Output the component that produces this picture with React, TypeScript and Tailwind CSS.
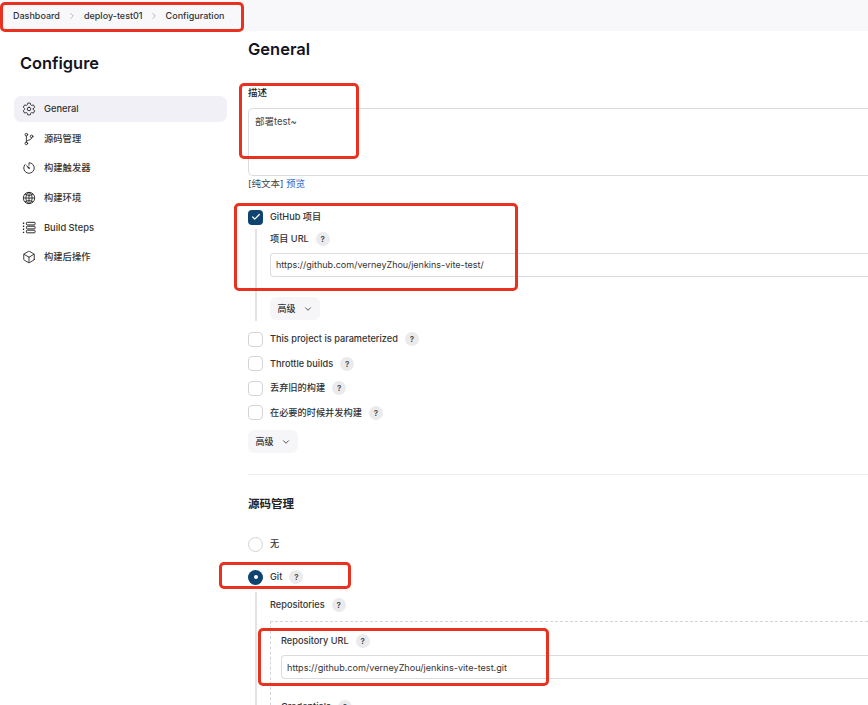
import { Check, ChevronDown, ChevronRight } from "lucide-react";
import { IoSettingsOutline, IoGitBranchOutline, IoTimerOutline, IoGlobeOutline, IoCubeOutline } from "react-icons/io5";

const FONT = "font-['Inter','Noto_Sans_CJK_SC',sans-serif]";

// Build Steps icon: bullets on the left, stacked bars on the right
function StepsIcon({ size }: { size: number }) {
  return (
    <svg width={size} height={size} viewBox="0 0 16 16" fill="none" stroke="#222" strokeWidth="1.1">
      <path d="M1 2.5h1.5M1 6h1.5M1 9.5h1.5M1 13h1.5" strokeWidth="1.6" />
      <rect x="5" y="1.5" width="10" height="3" rx="1" />
      <rect x="5" y="6" width="10" height="3" rx="1" />
      <rect x="5" y="10.5" width="10" height="3" rx="1" />
    </svg>
  );
}

const navItems = [
  { label: "General", icon: IoSettingsOutline, active: true },
  { label: "源码管理", icon: IoGitBranchOutline },
  { label: "构建触发器", icon: IoTimerOutline },
  { label: "构建环境", icon: IoGlobeOutline },
  { label: "Build Steps", icon: StepsIcon },
  { label: "构建后操作", icon: IoCubeOutline },
];

function Help() {
  return (
    <span className="flex h-[14px] w-[14px] items-center justify-center rounded-full bg-[#ebebed] text-[8px] font-semibold text-[#444]">
      ?
    </span>
  );
}

function Box({ checked }: { checked?: boolean }) {
  return checked ? (
    <span className="flex h-[15px] w-[15px] items-center justify-center rounded-[4px] bg-[#0f4470]">
      <Check size={10} strokeWidth={3} color="#fff" />
    </span>
  ) : (
    <span className="h-[15px] w-[15px] rounded-[4px] border border-[#d4d4d8] bg-white" />
  );
}

function CheckRow({ label }: { label: string }) {
  return (
    <div className="flex h-[24.5px] items-center">
      <Box />
      <span className="ml-[7px] text-[9.2px] font-medium text-[#333]">{label}</span>
      <span className="ml-[7px]">
        <Help />
      </span>
    </div>
  );
}

function Advanced() {
  return (
    <div className="flex h-[23px] w-[50px] items-center justify-center gap-[7px] rounded-[6px] bg-[#f6f6f9] text-[9px] font-medium text-[#333]">
      高级
      <ChevronDown size={10} strokeWidth={2} />
    </div>
  );
}

function Mark({ className }: { className: string }) {
  return <div className={`absolute rounded-[5px] border-[3px] border-[#e8321f] ${className}`} />;
}

export default function App() {
  return (
    <div className={`relative h-[705px] w-[868px] overflow-hidden bg-white ${FONT}`}>
      <div className="flex h-[31px] items-center bg-[#f8f8fa] pl-[13px] text-[9px] font-medium text-[#333]">
        <span>Dashboard</span>
        <ChevronRight size={10} className="mx-[7px] text-[#aaa]" />
        <span>deploy-test01</span>
        <ChevronRight size={10} className="mx-[6.5px] text-[#aaa]" />
        <span>Configuration</span>
      </div>

      <div className="flex">
        <aside className="w-[248px] shrink-0 pl-[14px] pr-[21px]">
          <h1 className="mt-[21px] mb-[22px] pl-[6px] text-[16.4px] leading-[22px] font-semibold text-[#14141f]">Configure</h1>
          <nav className="flex flex-col">
            {navItems.map((item) => (
              <div
                key={item.label}
                className={`flex h-[26px] mb-[3.7px] items-center gap-[8px] rounded-[7px] pl-[8px] text-[9.3px] font-medium text-[#333] ${item.active ? "bg-[#f0f0f6]" : ""}`}
              >
                <item.icon size={14} color="#222" />
                {item.label}
              </div>
            ))}
          </nav>
        </aside>

        <main className="min-w-0 flex-1">
          <h2 className="mt-[8px] text-[16.5px] leading-[20px] font-semibold text-[#14141f]">General</h2>

          <div className="mt-[27px] text-[9.5px] leading-[14px] font-medium text-[#222]">描述</div>
          <div className="mt-[8px] h-[68px] rounded-l-[5px] border border-r-0 border-[#dcdce0] px-[6px] py-[6px] text-[9.5px] text-[#444]">
            部署test~
          </div>
          <div className="mt-[1px] text-[9.5px] leading-[14px] text-[#444]">
            [纯文本] <span className="text-[#1d6fd0]">预览</span>
          </div>

          <div className="mt-[18px] flex h-[16px] items-center">
            <Box checked />
            <span className="ml-[7px] text-[9.2px] font-medium text-[#333]">GitHub 项目</span>
          </div>
          <div className="ml-[7px] mt-[4px] border-l-2 border-[#e4e4e8] pl-[13px]">
            <div className="flex h-[20px] items-center gap-[7px] text-[9.2px] font-medium text-[#333]">
              项目 URL
              <Help />
            </div>
            <div className="mt-[4px] flex h-[24px] items-center rounded-l-[4px] border border-r-0 border-[#dcdce0] pl-[5px] text-[9px] text-[#333]">
              https://github.com/verneyZhou/jenkins-vite-test/
            </div>
            <div className="mt-[20px] pb-[1px]">
              <Advanced />
            </div>
          </div>

          <div className="mt-[6px] flex flex-col">
            <CheckRow label="This project is parameterized" />
            <CheckRow label="Throttle builds" />
            <CheckRow label="丢弃旧的构建" />
            <CheckRow label="在必要的时候并发构建" />
          </div>
          <div className="mt-[5.4px]">
            <Advanced />
          </div>

          <div className="mt-[21px] h-px bg-[#eeeef0]" />
          <h3 className="mt-[21px] text-[11.5px] leading-[16px] font-semibold text-[#222]">源码管理</h3>

          <div className="mt-[24px] flex h-[16px] items-center">
            <span className="h-[15px] w-[15px] rounded-full border border-[#d4d4d8]" />
            <span className="ml-[7px] text-[9.2px] font-medium text-[#333]">无</span>
          </div>
          <div className="mt-[17px] flex h-[16px] items-center">
            <span className="flex h-[15px] w-[15px] items-center justify-center rounded-full bg-[#0f4470]">
              <span className="h-[4px] w-[4px] rounded-full bg-white" />
            </span>
            <span className="ml-[7px] text-[9.2px] font-medium text-[#333]">Git</span>
            <span className="ml-[7px]">
              <Help />
            </span>
          </div>

          <div className="ml-[7px] mt-[7px] h-[140px] border-l-2 border-[#e4e4e8] pl-[13px]">
            <div className="flex h-[20px] items-center gap-[7px] pt-[6px] text-[9.2px] font-medium text-[#333]">
              Repositories
              <Help />
            </div>
            <div className="mt-[9px] h-[120px] border-t border-l border-dashed border-[#d4d4d8] pl-[10px] pt-[11px]">
              <div className="flex h-[16px] items-center gap-[7px] text-[9.2px] font-medium text-[#333]">
                Repository URL
                <Help />
              </div>
              <div className="mt-[6px] flex h-[24px] items-center rounded-l-[4px] border border-r-0 border-[#dcdce0] pl-[5px] text-[9.1px] text-[#333]">
                https://github.com/verneyZhou/jenkins-vite-test.git
              </div>
              <div className="mt-[20px] flex h-[16px] items-center gap-[7px] text-[9.2px] font-medium text-[#333]">
                Credentials
                <Help />
              </div>
            </div>
          </div>
        </main>
      </div>

      <Mark className="left-0 top-[2px] h-[30px] w-[244px]" />
      <Mark className="left-[239px] top-[83px] h-[76px] w-[120px]" />
      <Mark className="left-[234px] top-[203px] h-[88px] w-[284px]" />
      <Mark className="left-[219px] top-[562px] h-[27px] w-[132px]" />
      <Mark className="left-[258px] top-[628px] h-[58px] w-[291px]" />
    </div>
  );
}
